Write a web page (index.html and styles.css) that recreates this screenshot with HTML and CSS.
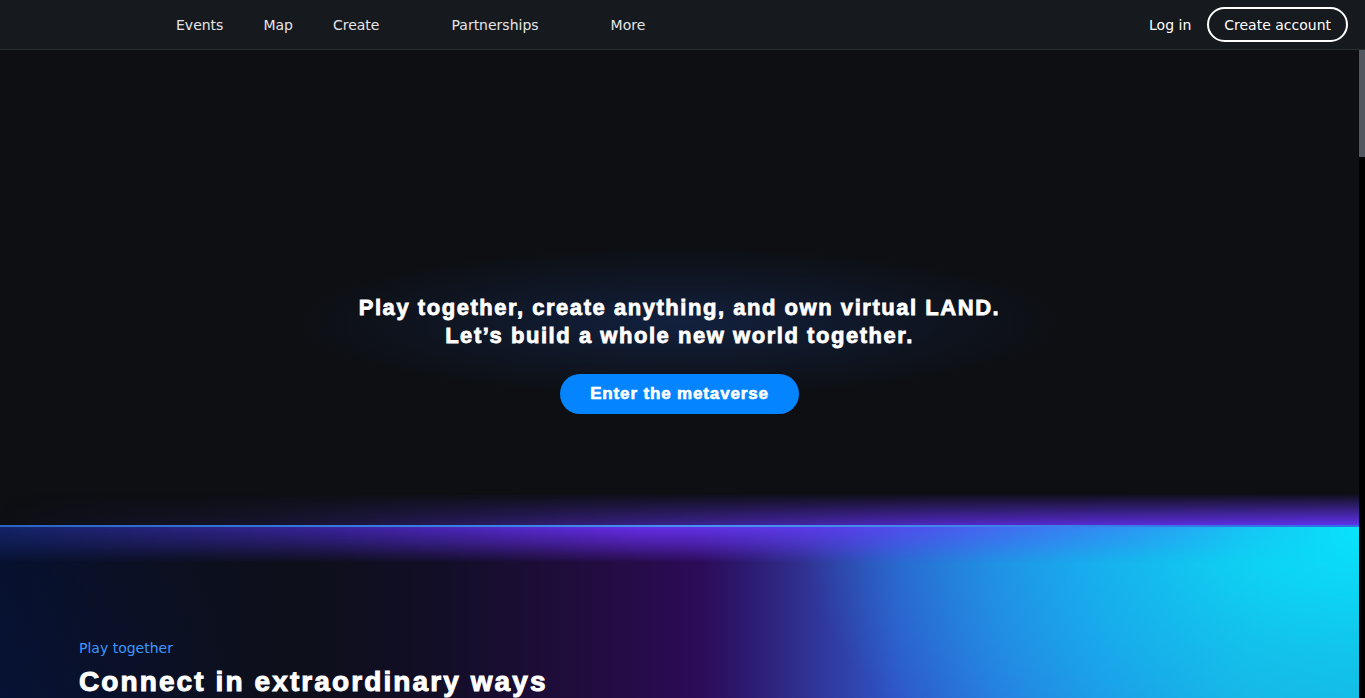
FILE: index.html
```html
<!DOCTYPE html>
<html lang="en">
<head>
<meta charset="utf-8">
<title>Decentraland</title>
<link rel="stylesheet" href="styles.css">
</head>
<body>
<div class="app">
  <header class="topbar">
    <nav class="nav">
      <a class="nav-link" href="#">Events</a>
      <a class="nav-link" href="#">Map</a>
      <a class="nav-link has-menu" href="#">Create</a>
      <a class="nav-link has-menu" href="#">Partnerships</a>
      <a class="nav-link" href="#">More</a>
    </nav>
    <div class="account">
      <a class="login" href="#">Log in</a>
      <a class="signup" href="#">Create account</a>
    </div>
  </header>
  <div class="viewport">
    <main class="page">
      <section class="hero">
        <h1 class="hero-title">Play together, create anything, and own virtual LAND.<br>Let’s build a whole new world together.</h1>
        <a class="cta" href="#">Enter the metaverse</a>
      </section>
      <div class="divider"></div>
      <section class="feature feature-play">
        <p class="eyebrow">Play together</p>
        <h2 class="feature-title">Connect in extraordinary ways</h2>
        <p class="feature-text">Explore, meet people and join events in a world built by its community.</p>
      </section>
      <section class="feature">
        <p class="eyebrow">Create anything</p>
        <h2 class="feature-title">Build and share your creations</h2>
        <p class="feature-text">Design scenes, wearables and emotes and bring them to life.</p>
      </section>
      <section class="feature">
        <p class="eyebrow">Own virtual LAND</p>
        <h2 class="feature-title">A world owned by its users</h2>
        <p class="feature-text">Shape the future of the platform with the DAO.</p>
      </section>
      <footer class="footer">
        <p class="footer-text">© 2024 Decentraland</p>
      </footer>
    </main>
    <div class="scroll-rail" aria-hidden="true"><div class="scroll-thumb"></div></div>
  </div>
</div>
</body>
</html>
```
FILE: styles.css
```css
* { box-sizing: border-box; }
html, body { margin: 0; padding: 0; height: 100%; }
body {
  background: #0d0f13;
  color: #fff;
  font-family: "DejaVu Sans", Verdana, sans-serif;
  overflow: hidden;
}
a { color: inherit; text-decoration: none; }

.app { display: flex; flex-direction: column; height: 100vh; }

.topbar {
  flex: 0 0 50px;
  display: flex;
  align-items: center;
  background: #16191e;
  border-bottom: 1px solid #2a2d32;
  padding: 0 17px 0 176px;
}
.nav { display: flex; align-items: center; gap: 40px; }
.nav-link { font-size: 14px; line-height: 17px; color: #e4e6e9; padding-top: 2px; }
.nav-link.has-menu { padding-right: 32px; }

.account { margin-left: auto; display: flex; align-items: center; gap: 16px; }
.login { font-size: 14px; line-height: 17px; color: #fff; padding-top: 2px; }
.signup {
  display: flex; align-items: center; justify-content: center;
  height: 35px; padding: 2px 15px 0;
  border: 2px solid #fff; border-radius: 18px;
  font-size: 14px; line-height: 17px; color: #fff;
}

.viewport {
  flex: 1 1 auto;
  min-height: 0;
  display: flex;
}
.page {
  flex: 1 1 auto;
  min-width: 0;
  overflow-y: auto;
  overflow-x: hidden;
  scrollbar-width: none;
}
.page::-webkit-scrollbar { display: none; }
.scroll-rail {
  flex: 0 0 6px;
  background: #000;
}
.scroll-thumb {
  height: 107px;
  background: #525860;
}

.hero {
  height: 475px;
  display: flex; flex-direction: column; align-items: center;
  padding-top: 244px;
  background-color: #0d0f13;
  background-image: radial-gradient(ellipse 380px 75px at 50% 272px, rgba(22, 45, 92, 0.6) 0%, rgba(22, 45, 92, 0.25) 55%, rgba(22, 45, 92, 0) 100%);
}
.hero-title {
  margin: 0;
  font-family: "Liberation Sans", Arial, sans-serif;
  font-weight: 700;
  font-size: 22px;
  line-height: 28px;
  letter-spacing: 0.07em;
  text-align: center;
  color: #fff;
  -webkit-text-stroke: 0.8px #fff;
}
.cta {
  margin-top: 24px;
  height: 40px; padding: 0 30px;
  display: flex; align-items: center; justify-content: center;
  background: #0584ff;
  border-radius: 20px;
  font-family: "Liberation Sans", Arial, sans-serif;
  font-weight: 700; font-size: 17px; letter-spacing: 0.05em;
  color: #fff;
  -webkit-text-stroke: 0.6px #fff;
}

.divider {
  position: relative;
  height: 2px;
  background: linear-gradient(90deg, #2866c6 0%, #3a80e6 35%, #4a92f2 52%, #3d82ec 75%, #2f6ee0 100%);
  z-index: 2;
}
.divider::before {
  content: "";
  position: absolute; left: 0; right: 0; bottom: 2px;
  height: 32px;
  background: linear-gradient(90deg, rgba(20,25,60,0) 0%, rgba(40,30,100,0.35) 20%, rgba(70,38,170,0.7) 45%, rgba(88,44,215,0.9) 70%, rgba(96,50,238,1) 100%);
  -webkit-mask-image: linear-gradient(to top, #000 0%, rgba(0,0,0,0.55) 45%, transparent 100%);
  mask-image: linear-gradient(to top, #000 0%, rgba(0,0,0,0.55) 45%, transparent 100%);
}
.divider::after {
  content: "";
  position: absolute; left: 0; right: 0; top: 2px;
  height: 36px;
  background: linear-gradient(90deg, rgba(30,50,150,0.55) 0%, rgba(70,40,190,0.8) 25%, rgba(105,46,240,0.95) 47%, rgba(92,62,240,0.9) 62%, rgba(70,110,245,0.7) 78%, rgba(40,170,245,0.3) 92%, rgba(20,200,250,0) 100%);
  -webkit-mask-image: linear-gradient(to bottom, #000 0%, rgba(0,0,0,0.6) 45%, transparent 100%);
  mask-image: linear-gradient(to bottom, #000 0%, rgba(0,0,0,0.6) 45%, transparent 100%);
}

.feature {
  min-height: 1100px;
  padding: 111px 79px 0;
  background: #0d0f13;
}
.feature-play {
  background-color: #0d0f13;
  background-image:
    radial-gradient(ellipse 560px 320px at 100% 0%, rgba(8,228,252,1) 0%, rgba(8,228,252,0.5) 40%, rgba(8,228,252,0) 100%),
    radial-gradient(ellipse 300px 500px at 0% 60%, rgba(5,20,70,0.6) 0%, rgba(5,20,70,0) 100%),
    linear-gradient(90deg, #07112c 0%, #0b1022 8%, #0d0f1a 22%, #130e28 33%, #220c40 44%, #2c0b58 51.5%, #2d1a70 55%, #303090 59%, #2f55c8 66%, #2a72dc 73.6%, #2288e2 81%, #1ea0dc 92%, #1aa4d8 100%);
  background-size: 100% 700px;
  background-repeat: no-repeat;
}
.eyebrow {
  margin: 0;
  font-size: 14px; line-height: 20px;
  color: #3b98ff;
}
.feature-title {
  margin: 7px 0 0;
  font-family: "Liberation Sans", Arial, sans-serif;
  font-weight: 700;
  font-size: 28px; line-height: 34px;
  letter-spacing: 0.075em;
  color: #fff;
  -webkit-text-stroke: 1px #fff;
}
.feature-text {
  margin: 16px 0 0;
  max-width: 520px;
  font-size: 16px; line-height: 24px;
  color: #c9ccd2;
}
.footer {
  height: 148px;
  padding: 40px 79px;
  background: #0d0f13;
  border-top: 1px solid #2a2d32;
}
.footer-text { margin: 0; font-size: 13px; color: #8b9099; }
```
